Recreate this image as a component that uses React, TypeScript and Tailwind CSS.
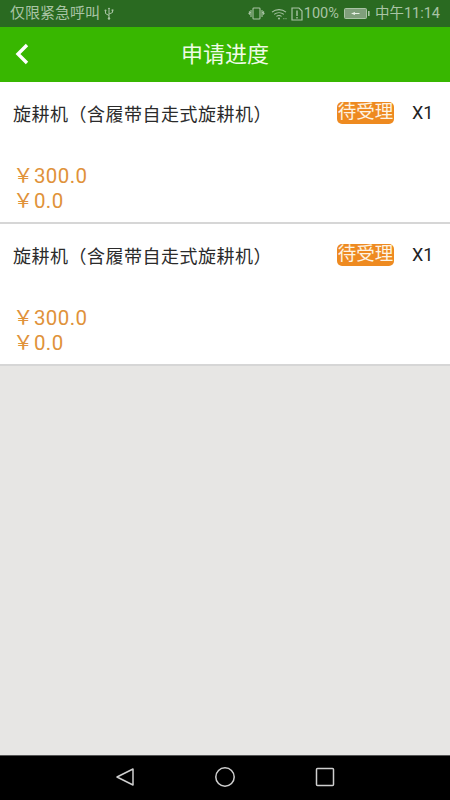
const cjk = "font-['Roboto','Noto_Sans_CJK_SC',sans-serif]";
const paren = "font-['Noto_Sans_CJK_TC',sans-serif]";

function UsbIcon() {
	return (
		<svg width="10" height="13" viewBox="0 0 10 13" fill="none" stroke="#a9c4a5" strokeWidth="1">
			<path d="M5 1v11M1.5 4v2.5L5 8.5M8.5 3.5v2L5 7" />
			<path d="M5 0.5l1.2 1.5H3.8z" fill="#a9c4a5" stroke="none" />
			<circle cx="1.5" cy="3.5" r="1" fill="#a9c4a5" stroke="none" />
			<rect x="7.6" y="2.4" width="1.8" height="1.8" fill="#a9c4a5" stroke="none" />
			<circle cx="5" cy="11.5" r="1.2" fill="#a9c4a5" stroke="none" />
		</svg>
	);
}

function VibrateIcon() {
	return (
		<svg width="17" height="13" viewBox="0 0 17 13" fill="none" stroke="#a9c4a5" strokeWidth="1.1">
			<rect x="5" y="1" width="7" height="11" rx="0.8" />
			<path d="M3 3v7M1 4.5l1 1-1 1 1 1M14 3v7M16 4.5l-1 1 1 1-1 1" />
		</svg>
	);
}

function WifiIcon() {
	return (
		<svg width="16" height="12" viewBox="0 0 16 12" fill="none" stroke="#a9c4a5" strokeWidth="1.1">
			<path d="M1 4.2C5 .8 11 .8 15 4.2M3.2 6.4c2.8-2.2 6.8-2.2 9.6 0M5.4 8.4c1.6-1.1 3.6-1.1 5.2 0" />
			<circle cx="8" cy="10.4" r="1" fill="#a9c4a5" stroke="none" />
			<path d="M12.5 10.6h.8M14.6 10.6h.8" strokeWidth="1.4" />
		</svg>
	);
}

function SimIcon() {
	return (
		<svg width="12" height="14" viewBox="0 0 12 14" fill="none" stroke="#a9c4a5" strokeWidth="1.2">
			<path d="M1 1h7l3 3v9H1z" />
			<path d="M6 3.5v5.5M6 10v1.5" strokeWidth="1.4" />
		</svg>
	);
}

function BatteryIcon() {
	return (
		<svg width="26" height="11" viewBox="0 0 26 11">
			<rect x="0.5" y="0.5" width="22" height="10" rx="1" fill="#7f9f7b" stroke="#a9c4a5" />
			<rect x="24" y="3" width="1.6" height="5" fill="#a9c4a5" />
			<path d="M7 5.5l4-1.6v1h4.5v1.2H11v1z" fill="#e6efe4" />
		</svg>
	);
}

function Row() {
	return (
		<div className="bg-white border-b-2 border-[#d6d6d6] h-[142px] pl-[13px] pr-[18px] pt-[18px]">
			<div className="flex items-center h-[25px]">
				<span className="text-[18px] tracking-[0.5px] text-[#2b2b2b] whitespace-nowrap relative top-[1px]">
					旋耕机<span className={paren}>（</span>含履带自走式旋耕机<span className={paren}>）</span>
				</span>
				<span className="ml-auto bg-[#ee8a20] rounded-[5px] h-[22px] w-[57px] flex items-center justify-center text-[18.5px] text-[#fdf3e3] whitespace-nowrap">待受理</span>
				<span className="ml-[18px] w-[20px] text-[18px] text-[#222222] whitespace-nowrap">X1</span>
			</div>
			<div className="mt-[39px] text-[20.5px] leading-[25px] text-[#e0923a] tracking-[0.4px]">
				<div>￥300.0</div>
				<div>￥0.0</div>
			</div>
		</div>
	);
}

export default function App() {
	return (
		<div className={`${cjk} w-[450px] h-[800px] flex flex-col bg-[#e7e6e4] overflow-hidden`}>
			{/* Status bar */}
			<div className="h-[27px] bg-[#2a6a21] flex items-center pl-[10px] pr-[10px] text-[14.5px] text-[#a9c4a5]">
				<span className="whitespace-nowrap text-[15px]">仅限紧急呼叫</span>
				<span className="ml-[4px]"><UsbIcon /></span>
				<div className="ml-auto flex items-center">
					<VibrateIcon />
					<span className="ml-[6px]"><WifiIcon /></span>
					<span className="ml-[4px]"><SimIcon /></span>
					<span className="ml-[1px] whitespace-nowrap">100%</span>
					<span className="ml-[5px]"><BatteryIcon /></span>
					<span className="ml-[5px] whitespace-nowrap">中午11:14</span>
				</div>
			</div>

			{/* Title bar */}
			<div className="relative h-[55px] bg-[#38b700] flex items-center justify-center">
				<svg className="absolute left-[14px] top-[16px]" width="16" height="22" viewBox="0 0 16 22" fill="none" stroke="#ffffff" strokeWidth="3.4">
					<path d="M13 2L4 11l9 9" />
				</svg>
				<span className="text-[22px] text-[#eefbe6]">申请进度</span>
			</div>

			{/* List */}
			<Row />
			<Row />
			<div className="flex-1" />

			{/* Nav bar */}
			<div className="h-[45px] bg-black border-t border-[#555555] flex items-center justify-center relative">
				<svg className="absolute left-[115px] top-[11px]" width="20" height="20" viewBox="0 0 20 20" fill="none" stroke="#cfcfcf" strokeWidth="1.5" strokeLinejoin="round">
					<path d="M18 2v16L2 10z" />
				</svg>
				<svg className="absolute left-[214px] top-[11px]" width="22" height="20" viewBox="0 0 22 20" fill="none" stroke="#cfcfcf" strokeWidth="1.5">
					<circle cx="11" cy="10" r="9.2" />
				</svg>
				<svg className="absolute left-[315px] top-[11px]" width="20" height="20" viewBox="0 0 20 20" fill="none" stroke="#cfcfcf" strokeWidth="1.5">
					<rect x="1.5" y="1.5" width="17" height="17" rx="1" />
				</svg>
			</div>
		</div>
	);
}
